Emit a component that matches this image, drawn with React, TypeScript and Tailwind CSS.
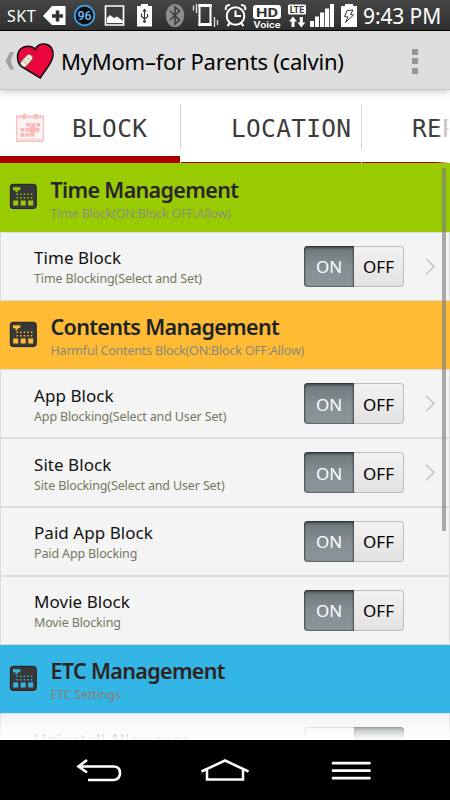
import type { ReactNode } from "react";

type Item = {
  title: string;
  subtitle: string;
  arrow?: boolean;
  on?: boolean;
};

type Group = {
  title: string;
  subtitle: string;
  bg: string;
  accent: string;
  titleClass: string;
  subtitleClass: string;
  items: Item[];
};

const groups: Group[] = [
  {
    title: "Time Management",
    subtitle: "Time Block(ON:Block OFF:Allow)",
    bg: "bg-[#99cc00]",
    accent: "#99cc00",
    titleClass: "text-[#2b2330]",
    subtitleClass: "text-[#8b8f7c]",
    items: [{ title: "Time Block", subtitle: "Time Blocking(Select and Set)", arrow: true, on: true }],
  },
  {
    title: "Contents Management",
    subtitle: "Harmful Contents Block(ON:Block OFF:Allow)",
    bg: "bg-[#ffbb33]",
    accent: "#ffbb33",
    titleClass: "text-[#1c242b]",
    subtitleClass: "text-[#868a7c]",
    items: [
      { title: "App Block", subtitle: "App Blocking(Select and User Set)", arrow: true, on: true },
      { title: "Site Block", subtitle: "Site Blocking(Select and User Set)", arrow: true, on: true },
      { title: "Paid App Block", subtitle: "Paid App Blocking", on: true },
      { title: "Movie Block", subtitle: "Movie Blocking", on: true },
    ],
  },
  {
    title: "ETC Management",
    subtitle: "ETC Settings",
    bg: "bg-[#33b5e5]",
    accent: "#33b5e5",
    titleClass: "text-[#30231d]",
    subtitleClass: "text-[#877d78]",
    items: [{ title: "Uninstall Allowance", subtitle: "Uninstall Allowance", on: false }],
  },
];

function StatusBar() {
  return (
    <div className="flex h-[31px] shrink-0 items-start border-b border-black bg-linear-to-b from-[#454545] to-[#303030] text-white">
      <span className="ml-[7px] w-[29px] text-[16px] leading-[32px] tracking-[0.5px] whitespace-nowrap">SKT</span>
      <svg className="ml-[6px] shrink-0" width="24" height="30" viewBox="42 0 24 30">
        <path d="M43 16 52 6h13.500v19H52Z" fill="#fff" />
        <path d="M57.500 10.500v11M52 16h11" stroke="#333" strokeWidth="3.500" />
      </svg>
      <svg className="ml-[7px] shrink-0" width="23" height="30" viewBox="73 0 23 30">
        <circle cx="84.500" cy="15.500" r="9.800" fill="#0c0c0c" stroke="#36a1ee" strokeWidth="1.800" />
        <text x="84.500" y="20" textAnchor="middle" fontSize="12.500" fontWeight="500" fontFamily="Roboto, sans-serif" fill="#6cbcf5">96</text>
      </svg>
      <svg className="ml-[8px] shrink-0" width="22" height="30" viewBox="104 0 22 30">
        <path d="M105.500 6h18v19h-18Z" fill="#3c3c3c" stroke="#fff" strokeWidth="1.700" />
        <path d="m107 23 0-5 3-3 4 3 3-1.500 6 4.500v2Z" fill="#fff" />
      </svg>
      <svg className="ml-[10px] shrink-0" width="18" height="30" viewBox="136 0 18 30">
        <path d="M137 6h4V4h7v2h4v20.500h-15Z" fill="#fff" />
        <path d="M144.500 10v12M141.500 13.500v3l3 2.500 3-2v-3M143 11.500l1.500-2 1.500 2" fill="none" stroke="#333" strokeWidth="1.200" />
        <circle cx="144.500" cy="21.500" r="1.400" fill="#333" />
      </svg>
      <svg className="ml-[11px] shrink-0" width="20" height="30" viewBox="165 0 20 30">
        <ellipse cx="175" cy="15.500" rx="9.200" ry="11.500" fill="#8d8d8d" />
        <path d="m170 11 9.500 9-4.500 4V7l4.500 4-9.500 9" fill="none" stroke="#3a3a3a" strokeWidth="1.500" />
      </svg>
      <svg className="ml-[7px] shrink-0" width="27" height="30" viewBox="192 0 27 30">
        <path d="M199.500 5h11v20h-11Z" fill="none" stroke="#fff" strokeWidth="2" />
        <path d="M198.500 4h13v3h-13ZM198.500 23h13v3h-13Z" fill="#fff" />
        <path d="M196.500 4v9M193.500 5.500v5M214.500 17v10M217.500 20v5" stroke="#ddd" strokeWidth="1.400" />
      </svg>
      <svg className="ml-[5px] shrink-0" width="24" height="30" viewBox="224 0 24 30">
        <circle cx="235.500" cy="16" r="8.800" fill="none" stroke="#fff" strokeWidth="2" />
        <path d="M235.500 10.500V16h5.500M226 10c-1-3 1-5.500 4-5M245 10c1-3-1-5.500-4-5M230 23l-2.500 3M241 23l2.500 3" fill="none" stroke="#fff" strokeWidth="2" />
      </svg>
      <svg className="ml-[4px] shrink-0" width="30" height="30" viewBox="252 0 30 30">
        <rect x="253" y="5" width="28" height="14" rx="3" fill="#fff" />
        <text x="267" y="16.800" textAnchor="middle" fontSize="13.500" fontWeight="700" textLength="22" lengthAdjust="spacingAndGlyphs" fontFamily="Roboto, sans-serif" fill="#333">HD</text>
        <text x="267" y="27.500" textAnchor="middle" fontSize="9.500" fontWeight="600" textLength="27" lengthAdjust="spacingAndGlyphs" fontFamily="Roboto, sans-serif" fill="#fff">Voice</text>
      </svg>
      <svg className="ml-[5px] shrink-0" width="20" height="30" viewBox="287 0 20 30">
        <rect x="288" y="4.500" width="18" height="10" rx="1.500" fill="#fff" />
        <text x="297" y="12.700" textAnchor="middle" fontSize="9" fontWeight="700" textLength="14.500" lengthAdjust="spacingAndGlyphs" fontFamily="Roboto, sans-serif" fill="#333">LTE</text>
        <path d="M289 21.500 293 16.500l4 5h-2.500V27h-3v-5.500ZM297.500 22.500h2.300v-5.500h3v5.500h2.500l-4 5Z" fill="#fff" />
      </svg>
      <svg className="ml-[3px] shrink-0" width="25" height="30" viewBox="310 0 25 30">
        <path d="M310 21h4v6h-4ZM315 16.500h4V27h-4ZM320 12.500h4.200V27H320ZM325 8.500h4.200V27H325ZM330 4h4v23h-4Z" fill="#fff" />
      </svg>
      <svg className="ml-[5px] shrink-0" width="18" height="30" viewBox="340 0 18 30">
        <path d="M341 6h4V4h8v2h4v21h-16Z" fill="#fff" />
        <path d="m347 10.500 6-.5-2.500 4.500 3 .5-8 7.500 2.500-5.500-3.500-.5Z" fill="none" stroke="#333" strokeWidth="1" />
      </svg>
      <span className="ml-[5px] text-[21px] leading-[33px] tracking-[-0.1px] whitespace-nowrap">9:43 PM</span>
    </div>
  );
}

function ActionBar() {
  return (
    <header className="z-10 flex h-[59px] shrink-0 items-center border-b border-[#c4c4c4] bg-[#dddddd] shadow-[0_2px_7px_rgba(0,0,0,0.2)]">
      <svg className="mt-[2px] ml-[5px] shrink-0" width="10" height="20" viewBox="0 0 10 20">
        <path d="M5 1h4L5.500 10 9 18.500H5L.5 10Z" fill="#a1a1a1" />
      </svg>
      <svg className="mt-[2px] ml-px shrink-0" width="39" height="38" viewBox="16 42 39 38">
        <path
          d="M40.300 78 21.200 66.500C16.500 61.500 16.300 53 20.500 49c4.500-4 11.500-3.500 15 .5C36 45.500 40.500 43.500 45 44c5.500.6 8.800 5.500 8 11.500-.8 8.500-7.700 13.500-12.700 22.500Z"
          fill="#e9063a"
          stroke="#0c0c0c"
          strokeWidth="1.500"
        />
        <g transform="rotate(-48 26.500 60.500)">
          <rect x="19.500" y="57.200" width="14" height="7" rx="3" fill="#f7f0e2" stroke="#5f5148" strokeWidth=".7" />
          <path d="M23.700 57.500v6.400M29.300 57.500v6.400" stroke="#a89c8e" strokeWidth=".8" />
          <path d="M25 59.300h3M25 61.900h3" stroke="#c4b59f" strokeWidth=".8" />
        </g>
      </svg>
      <h1 className="mt-[2px] ml-[6px] flex-1 text-[22px] leading-[30px] tracking-[-0.22px] whitespace-nowrap text-black">
        MyMom–for Parents (calvin)
      </h1>
      <div className="mr-[32px] flex flex-col gap-[3.500px] pt-[2px]">
        <i className="block size-[6px] bg-[#969696]" />
        <i className="block size-[6px] bg-[#969696]" />
        <i className="block size-[6px] bg-[#969696]" />
      </div>
    </header>
  );
}

function CalendarIcon() {
  return (
    <svg className="shrink-0" width="28" height="29" viewBox="16 112 28 29">
      <path d="M16.700 115h26.600v25.300H16.700Z" fill="#fff4f4" stroke="#f8c0c0" strokeWidth="1.300" />
      <path d="M17.500 116.500h25M17.500 138.800h25" stroke="#fad4d4" strokeWidth="2" />
      <path d="M24.200 114.500v2M35.800 114.500v2" stroke="#f8c0c0" strokeWidth="4" strokeLinecap="round" />
      <path d="M26 123.800h14M20.500 128.800h19.500M20.500 133.800h14" stroke="#f9b9b9" strokeWidth="3.800" strokeDasharray="4 1" />
      <circle cx="32.600" cy="128.800" r="3.600" fill="#f9b9b9" />
    </svg>
  );
}

function Tabs() {
  const label = "font-['DejaVu_Sans_Mono',monospace] text-[24.5px] leading-[30px] tracking-[0.3px] whitespace-nowrap text-[#3c3c3c]";
  return (
    <nav className="relative flex h-[73px] shrink-0 overflow-hidden bg-white">
      <div className="flex w-[180px] shrink-0 flex-col">
        <div className="flex flex-1 items-start pt-[23px] pl-[16px]">
          <CalendarIcon />
          <span className={`${label} mt-px ml-[28px]`}>BLOCK</span>
        </div>
        <div className="h-[7px] bg-[#aa0000]" />
      </div>
      <div className="mt-[14px] mb-[13px] w-px shrink-0 bg-[#d8d8d8]" />
      <div className="flex w-[180px] shrink-0 flex-col border-b border-[#aa0000] pt-[24px] pl-[50px]">
        <span className={label}>LOCATION</span>
      </div>
      <div className="mt-[14px] mb-[13px] w-px shrink-0 bg-[#d8d8d8]" />
      <div className="flex w-[180px] shrink-0 flex-col border-b border-[#aa0000] pt-[24px] pl-[50px]">
        <span className={label}>REPORT</span>
      </div>
      <div className="absolute inset-y-0 right-0 w-[14px] bg-linear-to-r from-transparent to-white" />
    </nav>
  );
}

function GroupIcon({ accent }: { accent: string }) {
  return (
    <svg className="shrink-0" width="28" height="27" viewBox="9 183 28 27">
      <rect x="9.800" y="185" width="27" height="25" rx="3" fill="#fff" opacity=".3" />
      <rect x="10.300" y="184.300" width="26" height="24.400" rx="2.800" fill="#383838" stroke="#1e1e1e" />
      <path d="M13 187.300h7.300v3H17.500v2h-2v-2H13Z" fill={accent} />
      <path d="M16.500 194.300h16M16.500 197.700h16" stroke={accent} strokeWidth="1.400" strokeDasharray="1.400 2.200" />
      <path d="M13.200 200.500h5v5h-5ZM20.700 200.500h5v5h-5ZM28.200 200.500h5v5h-5Z" fill={accent} />
    </svg>
  );
}

function Toggle({ on }: { on?: boolean }) {
  const active =
    "bg-linear-to-b from-[#6d7679] via-[#858e92] to-[#8c9599] text-white shadow-[inset_0_2px_3px_rgba(0,0,0,0.45),inset_0_0_1px_1px_rgba(50,60,65,0.5)]";
  const idle = "bg-linear-to-b from-[#f2f2f2] to-[#e2e2e2] text-black border border-[#bdbdbd]";
  return (
    <div className="flex h-[41px] w-[100px] shrink-0 text-[17px] leading-none font-normal">
      <span className={`flex w-1/2 items-center justify-center rounded-l-[4px] pt-px ${on ? active : `${idle} border-r-0`}`}>ON</span>
      <span className={`flex w-1/2 items-center justify-center rounded-r-[4px] pt-px ${on ? `${idle} border-l-0` : active}`}>OFF</span>
    </div>
  );
}

function Row({ item }: { item: Item }) {
  return (
    <div className="flex h-[68.8px] shrink-0 items-start border border-[#dcdcdc] bg-[#f4f4f4] pl-[33px]">
      <div className="flex w-[270px] flex-col pt-[13.500px] whitespace-nowrap">
        <span className="text-[17px] leading-[24px] tracking-[0.05px] text-[#111]">{item.title}</span>
        <span className="text-[12.5px] leading-[17px] tracking-[-0.14px] text-[#74775f]">{item.subtitle}</span>
      </div>
      <div className="pt-[13px]">
        <Toggle on={item.on} />
      </div>
      {item.arrow && (
        <svg className="mt-[25px] ml-[21px]" width="10" height="17" viewBox="0 0 10 17">
          <path d="m1 .8 8 7.700-8 7.700" fill="none" stroke="#bbbec2" strokeWidth="1.300" />
        </svg>
      )}
    </div>
  );
}

function GroupHeader({ group }: { group: Group }) {
  return (
    <div className={`flex h-[68.8px] shrink-0 items-start pl-[9px] ${group.bg}`}>
      <div className="pt-[20px]">
        <GroupIcon accent={group.accent} />
      </div>
      <div className="ml-[13.500px] flex flex-col pt-[11.500px] whitespace-nowrap">
        <span className={`text-[21.5px] leading-[30px] font-semibold tracking-[-0.66px] ${group.titleClass}`}>{group.title}</span>
        <span className={`text-[12.5px] leading-[17px] tracking-[-0.2px] ${group.subtitleClass}`}>{group.subtitle}</span>
      </div>
    </div>
  );
}

function SettingsList({ children }: { children: ReactNode }) {
  return (
    <main className="relative flex min-h-0 flex-1 flex-col overflow-hidden bg-white">
      {children}
      <div className="absolute top-[5px] right-[4px] h-[363px] w-[4px] bg-[#808080]/65" />
      <div className="absolute inset-x-0 bottom-0 h-[26px] bg-linear-to-b from-white/0 to-white" />
    </main>
  );
}

function NavBar() {
  return (
    <footer className="flex h-[60px] shrink-0 items-start bg-black pt-[16px] pl-[76px]">
      <svg width="46" height="30" viewBox="76 756 46 30" fill="none" stroke="#fff" strokeWidth="2.600">
        <path d="M79 766.500h34.500q6.500 0 6.500 6.500t-6.500 7H88M87 760l-8.500 6.500 8.500 6" />
      </svg>
      <svg className="ml-[78px]" width="50" height="30" viewBox="200 756 50 30" fill="none" stroke="#fff" strokeWidth="2.500">
        <path d="m201.500 771.500 23.500-11 23.500 11M207 769.500v10h36v-10" />
      </svg>
      <svg className="ml-[80px]" width="42" height="30" viewBox="330 756 42 30" stroke="#fff" strokeWidth="2.700" strokeLinecap="round">
        <path d="M333 763.200h36.500M333 770.700h36.500M333 778.200h36.500" />
      </svg>
    </footer>
  );
}

export default function App() {
  return (
    <div className="flex h-[800px] w-[450px] flex-col overflow-hidden bg-white font-['Noto_Sans',sans-serif]">
      <StatusBar />
      <ActionBar />
      <Tabs />
      <SettingsList>
        {groups.map((group) => (
          <section key={group.title} className="shrink-0">
            <GroupHeader group={group} />
            {group.items.map((item) => (
              <Row key={item.title} item={item} />
            ))}
          </section>
        ))}
      </SettingsList>
      <NavBar />
    </div>
  );
}
